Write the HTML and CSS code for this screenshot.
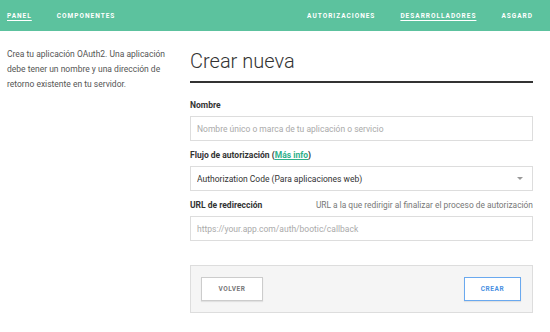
FILE: index.html
```html
<!DOCTYPE html>
<html lang="es">

<head>
    <meta charset="UTF-8">
    <meta name="viewport" content="width=device-width, initial-scale=1.0">
    <title>Crear nueva aplicación</title>
    <link rel="stylesheet" href="styles.css">
</head>

<body>

    <header class="topbar">
        <nav class="nav-left">
            <a href="#" class="nav-link active">Panel</a>
            <a href="#" class="nav-link">Componentes</a>
        </nav>
        <nav class="nav-right">
            <a href="#" class="nav-link">Autorizaciones</a>
            <a href="#" class="nav-link active">Desarrolladores</a>
            <a href="#" class="nav-link">Asgard</a>
        </nav>
    </header>

    <div class="content">
        <aside class="sidebar">
            <p>Crea tu aplicación OAuth2. Una aplicación debe tener un nombre y una dirección de retorno existente en tu servidor.</p>
        </aside>

        <main class="main">
            <h1>Crear nueva</h1>

            <form class="app-form">
                <div class="form-group">
                    <label for="name">Nombre</label>
                    <input type="text" id="name" placeholder="Nombre único o marca de tu aplicación o servicio">
                </div>

                <div class="form-group">
                    <label for="flow">Flujo de autorización (<a href="#" class="more-info">Más info</a>)</label>
                    <div class="select-wrap">
                        <select id="flow">
                            <option>Authorization Code (Para aplicaciones web)</option>
                        </select>
                    </div>
                </div>

                <div class="form-group">
                    <div class="label-row">
                        <label for="redirect">URL de redirección</label>
                        <span class="hint">URL a la que redirigir al finalizar el proceso de autorización</span>
                    </div>
                    <input type="text" id="redirect" placeholder="https://your.app.com/auth/bootic/callback">
                </div>

                <div class="actions">
                    <button type="button" class="btn">Volver</button>
                    <button type="submit" class="btn btn-primary">Crear</button>
                </div>
            </form>
        </main>
    </div>

</body>

</html>
```

FILE: styles.css
```css
body {
    font-family: 'Roboto', sans-serif;
    background-color: white;
    margin: 0;
    padding: 0;
    color: #333;
}

.topbar {
    background-color: #5cc29e;
    height: 31px;
    display: flex;
    justify-content: space-between;
    align-items: center;
    padding: 0 17px 0 7px;
}

.nav-left,
.nav-right {
    display: flex;
    gap: 25px;
}

.nav-link {
    color: white;
    font-size: 6.5px;
    font-weight: 700;
    letter-spacing: 1px;
    text-transform: uppercase;
    text-decoration: none;
}

.nav-link.active {
    text-decoration: underline;
    text-underline-offset: 2px;
}

.content {
    display: grid;
    grid-template-columns: 170px 1fr;
    gap: 13px;
    padding: 16px 17px 0 7px;
}

.sidebar p {
    margin: 0;
    font-size: 8.5px;
    line-height: 15px;
    color: #555;
}

.main h1 {
    margin: 2px 0 0;
    font-size: 20px;
    font-weight: 300;
    line-height: 24px;
    color: #333;
    padding-bottom: 8px;
    border-bottom: 2px solid #333;
}

.app-form {
    margin-top: 16px;
}

.form-group {
    margin-bottom: 8px;
}

.form-group label {
    display: block;
    font-size: 8.5px;
    font-weight: 700;
    line-height: 12px;
    color: #333;
    margin-bottom: 5px;
}

.label-row {
    display: flex;
    justify-content: space-between;
    align-items: baseline;
}

.hint {
    font-size: 8.4px;
    line-height: 12px;
    color: #777;
}

.more-info {
    color: #2fb08a;
    text-decoration: underline;
}

.form-group input[type="text"],
.form-group select {
    display: block;
    box-sizing: border-box;
    width: 100%;
    height: 25px;
    padding: 0 6px;
    font-family: 'Roboto', sans-serif;
    font-size: 8.5px;
    color: #333;
    border: 1px solid #ddd;
    border-radius: 0;
    background-color: white;
    outline: none;
}

.form-group input::placeholder {
    color: #aaa;
}

.select-wrap {
    position: relative;
}

.form-group select {
    appearance: none;
    -webkit-appearance: none;
}

.select-wrap::after {
    content: "";
    position: absolute;
    right: 10px;
    top: 11px;
    border-left: 3px solid transparent;
    border-right: 3px solid transparent;
    border-top: 3px solid #999;
}

.actions {
    display: flex;
    justify-content: space-between;
    align-items: center;
    margin-top: 24px;
    padding: 11px 11px 11px 10px;
    background-color: #f5f5f5;
    border: 1px solid #ddd;
}

.btn {
    font-family: 'Roboto', sans-serif;
    font-size: 6.5px;
    font-weight: 700;
    letter-spacing: 0.6px;
    text-transform: uppercase;
    color: #777;
    background-color: white;
    border: 1px solid #ccc;
    box-shadow: 0 1px 1px rgba(0, 0, 0, 0.08);
    height: 24px;
    width: 62px;
    cursor: pointer;
}

.btn-primary {
    width: 57px;
    color: #4a90e2;
    border-color: #6aa9ef;
}
```
